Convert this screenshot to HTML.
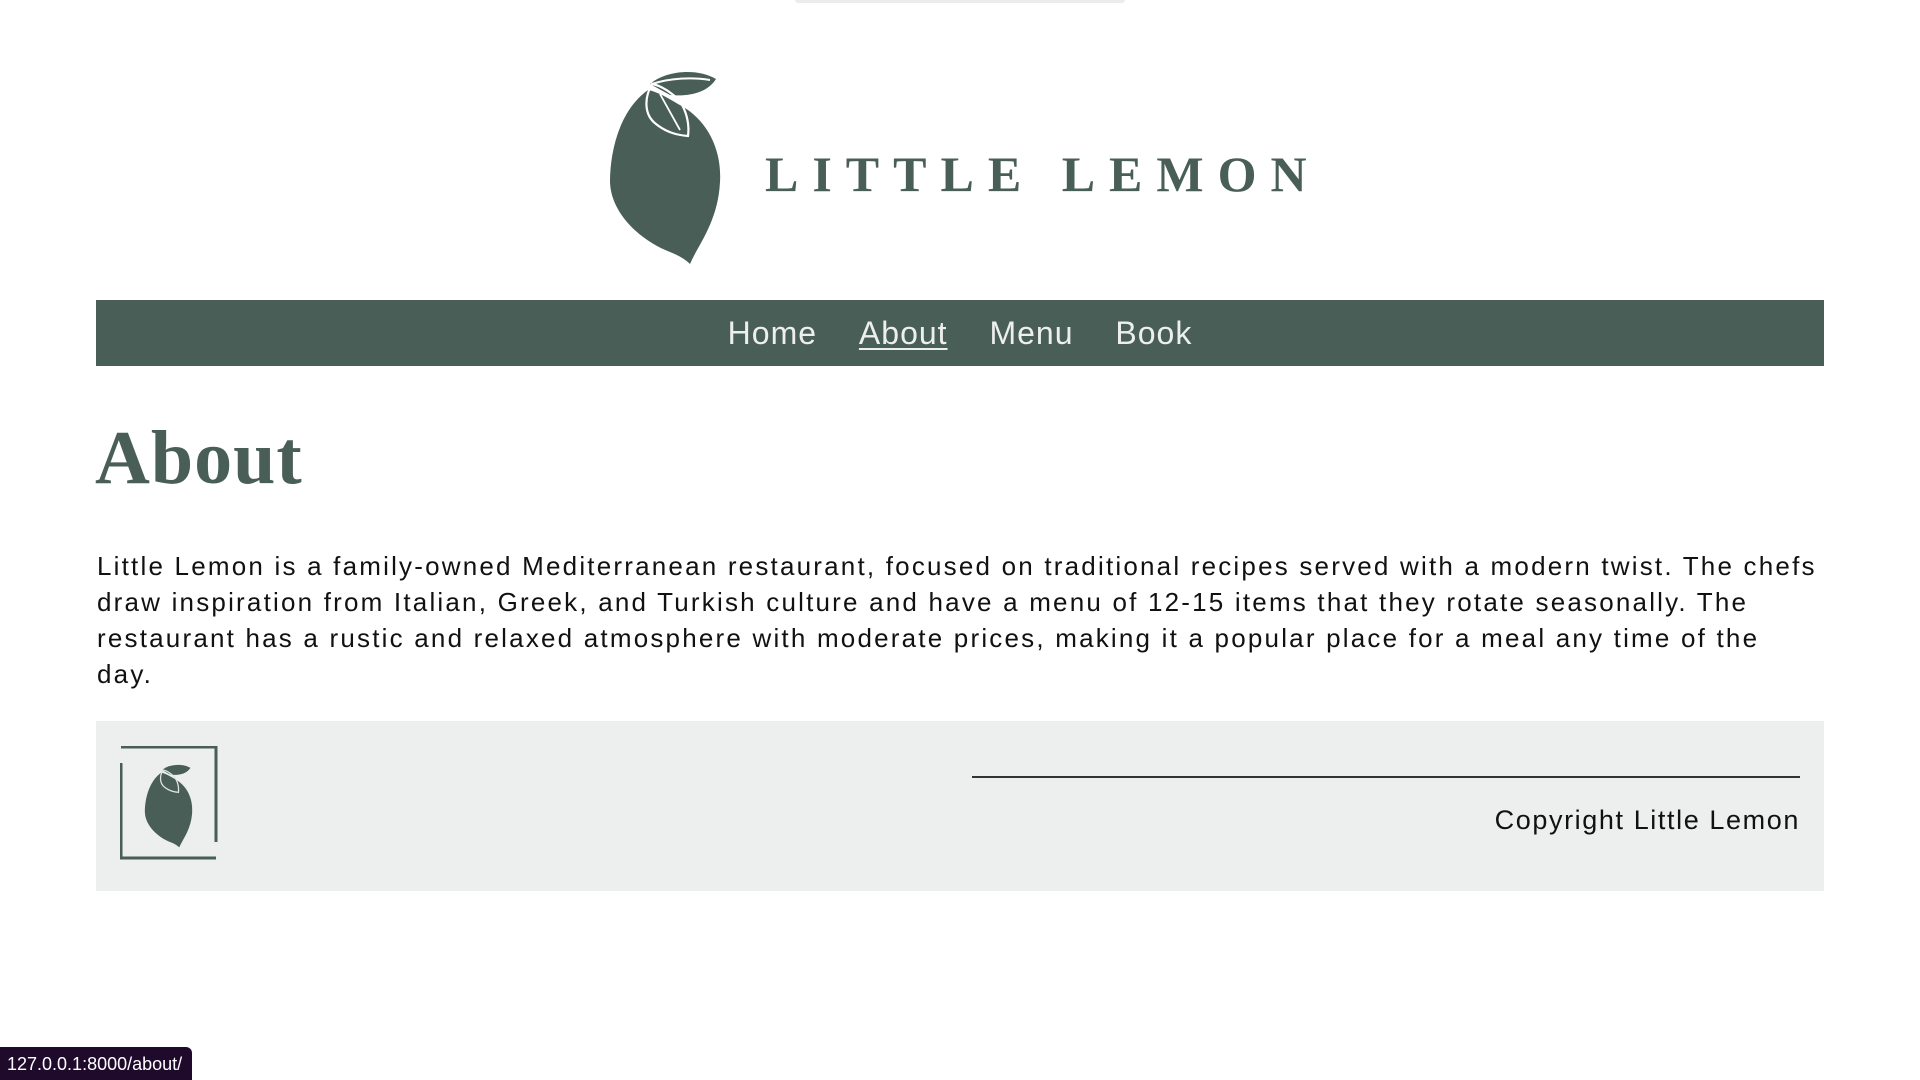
<!DOCTYPE html>
<html><head><meta charset="utf-8"><style>
*{margin:0;padding:0;box-sizing:border-box}
html,body{width:1920px;height:1080px;overflow:hidden;background:#fff;position:relative;font-family:"Liberation Sans",sans-serif}
.topbar{position:absolute;left:795px;top:0;width:330px;height:3px;background:#ececec;border-radius:0 0 3px 3px}
.logo{position:absolute;left:608px;top:70px}
.brand{position:absolute;left:765px;top:145px;font-family:"Liberation Serif",serif;font-weight:bold;font-size:50px;letter-spacing:14px;color:#495e57;white-space:nowrap}
nav{position:absolute;left:96px;top:300px;width:1728px;height:66px;background:#495e57;text-align:center;font-size:32px;line-height:66px;color:#edefee;letter-spacing:1px}
nav span{margin:0 16px}
nav span.u{text-decoration:underline;text-decoration-thickness:2px;text-underline-offset:4px}
h1{position:absolute;left:95px;top:410px;font-family:"Liberation Serif",serif;font-weight:bold;font-size:76px;color:#495e57;line-height:96px;letter-spacing:1px}
p{position:absolute;left:97px;top:548px;font-size:26px;line-height:36px;color:#111;white-space:nowrap;letter-spacing:2.2px}
footer{position:absolute;left:96px;top:721px;width:1728px;height:170px;background:#ecefee}
.hr{position:absolute;left:876px;top:55px;width:828px;height:2px;background:#333}
.copy{position:absolute;right:24px;top:84px;font-size:27px;color:#111;letter-spacing:1.6px}
.sq{position:absolute;left:24px;top:25px}
.status{position:absolute;left:0;top:1047px;width:192px;height:33px;background:#1f0a2c;border-top-right-radius:6px;color:#fff;font-size:18px;line-height:34px;padding-left:7px}
</style></head><body>
<div class="topbar"></div>
<svg class="logo" width="116" height="196" viewBox="0 0 116 196">
<path d="M40 20 C12 40 2 80 2 112 C3 145 35 172 62 182 C72 186 78 190 82 194 C90 175 110 152 112 112 C114 78 98 48 70 34 C60 28 50 22 40 20 Z" fill="#495e57"/>
<path d="M42 14 C58 0 90 -2 108 9 C100 22 82 27 62 25 Z" fill="#495e57"/>
<path d="M44 14 C62 8 84 7 102 10" fill="none" stroke="#fff" stroke-width="2"/>
<path d="M44 14 C36 28 36 45 48 54 C58 62 68 65 80 66 C82 50 76 32 64 24 C58 19 50 15 44 14 Z" fill="none" stroke="#fff" stroke-width="2.2"/>
<path d="M52 24 L72 60" stroke="#fff" stroke-width="1.8"/>
</svg>
<div class="brand">LITTLE LEMON</div>
<nav><span>Home</span> <span class="u">About</span> <span>Menu</span> <span>Book</span></nav>
<h1>About</h1>
<p>Little Lemon is a family-owned Mediterranean restaurant, focused on traditional recipes served with a modern twist. The chefs<br>draw inspiration from Italian, Greek, and Turkish culture and have a menu of 12-15 items that they rotate seasonally. The<br>restaurant has a rustic and relaxed atmosphere with moderate prices, making it a popular place for a meal any time of the<br>day.</p>
<footer>
<svg class="sq" width="98" height="114" viewBox="0 0 98 114">
<path d="M1 1 H96 V96 M1 17 V112 H96" fill="none" stroke="#495e57" stroke-width="3"/>
<g transform="translate(24,18) scale(0.43)">
<path d="M40 20 C12 40 2 80 2 112 C3 145 35 172 62 182 C72 186 78 190 82 194 C90 175 110 152 112 112 C114 78 98 48 70 34 C60 28 50 22 40 20 Z" fill="#495e57"/>
<path d="M42 14 C58 0 90 -2 108 9 C100 22 82 27 62 25 Z" fill="#495e57"/>
<path d="M44 14 C36 28 36 45 48 54 C58 62 68 65 80 66 C82 50 76 32 64 24 C58 19 50 15 44 14 Z" fill="none" stroke="#dfe3e1" stroke-width="3"/>
</g>
</svg>
<div class="hr"></div>
<div class="copy">Copyright Little Lemon</div>
</footer>
<div class="status">127.0.0.1:8000/about/</div>
</body></html>
